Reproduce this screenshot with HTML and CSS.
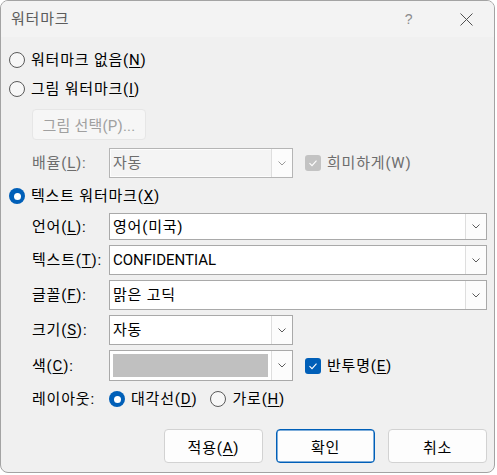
FILE: index.html
```html
<!DOCTYPE html>
<html lang="ko">
<head>
<meta charset="utf-8">
<title>워터마크</title>
<link rel="stylesheet" href="styles.css">
</head>
<body>
<div class="dialog">
  <div class="titlebar">
    <span class="title">워터마크</span>
    <span class="help">?</span>
    <span class="close"><svg width="13" height="13" viewBox="0 0 13 13"><path d="M0.5 0.5 L12.5 12.5 M12.5 0.5 L0.5 12.5" stroke="#505050" stroke-width="1" fill="none"/></svg></span>
  </div>
  <div class="content">
    <div class="radio-row r1"><span class="radio"></span><span class="rtext">워터마크 없음(<u>N</u>)</span></div>
    <div class="radio-row r2"><span class="radio"></span><span class="rtext">그림 워터마크(<u>I</u>)</span></div>
    <div class="indent pic-row"><button class="btn-disabled">그림 선택(P)...</button></div>
    <div class="field-row scale-row">
      <span class="label dim">배율(<u>L</u>):</span>
      <div class="combo short combo-disabled"><span class="value dim">자동</span><span class="drop"><svg width="8" height="5" viewBox="0 0 8 5"><path d="M0.5 0.5 L4 4 L7.5 0.5" fill="none" stroke="#9a9a9a"/></svg></span></div>
      <span class="check"><span class="box box-disabled"><svg width="16" height="16" viewBox="0 0 16 16"><path d="M4.5 8.2 L7 10.6 L11.5 5.6" fill="none" stroke="#fff" stroke-width="1.1"/></svg></span><span class="dim">희미하게(W)</span></span>
    </div>
    <div class="radio-row r3"><span class="radio on"></span><span class="rtext">텍스트 워터마크(<u>X</u>)</span></div>
    <div class="field-row lang-row">
      <span class="label">언어(<u>L</u>):</span>
      <div class="combo full"><span class="value">영어(미국)</span><span class="drop"><svg width="8" height="5" viewBox="0 0 8 5"><path d="M0.5 0.5 L4 4 L7.5 0.5" fill="none" stroke="#5c5c5c"/></svg></span></div>
    </div>
    <div class="field-row std-row">
      <span class="label">텍스트(<u>T</u>):</span>
      <div class="combo full"><span class="value latin">CONFIDENTIAL</span><span class="drop"><svg width="8" height="5" viewBox="0 0 8 5"><path d="M0.5 0.5 L4 4 L7.5 0.5" fill="none" stroke="#5c5c5c"/></svg></span></div>
    </div>
    <div class="field-row std-row">
      <span class="label">글꼴(<u>F</u>):</span>
      <div class="combo full"><span class="value">맑은 고딕</span><span class="drop"><svg width="8" height="5" viewBox="0 0 8 5"><path d="M0.5 0.5 L4 4 L7.5 0.5" fill="none" stroke="#5c5c5c"/></svg></span></div>
    </div>
    <div class="field-row std-row">
      <span class="label">크기(<u>S</u>):</span>
      <div class="combo short"><span class="value">자동</span><span class="drop"><svg width="8" height="5" viewBox="0 0 8 5"><path d="M0.5 0.5 L4 4 L7.5 0.5" fill="none" stroke="#5c5c5c"/></svg></span></div>
    </div>
    <div class="field-row color-row">
      <span class="label">색(<u>C</u>):</span>
      <div class="combo short"><span class="swatch-wrap"><span class="swatch"></span></span><span class="drop"><svg width="8" height="5" viewBox="0 0 8 5"><path d="M0.5 0.5 L4 4 L7.5 0.5" fill="none" stroke="#5c5c5c"/></svg></span></div>
      <span class="check"><span class="box box-on"><svg width="16" height="16" viewBox="0 0 16 16"><path d="M4.5 8.2 L7 10.6 L11.5 5.6" fill="none" stroke="#fff" stroke-width="1.1"/></svg></span><span>반투명(<u>E</u>)</span></span>
    </div>
    <div class="field-row layout-row">
      <span class="label">레이아웃:</span>
      <span class="radio on"></span><span class="rtext">대각선(<u>D</u>)</span>
      <span class="radio second"></span><span class="rtext">가로(<u>H</u>)</span>
    </div>
    <div class="buttons">
      <button class="btn">적용(<u>A</u>)</button>
      <button class="btn default">확인</button>
      <button class="btn">취소</button>
    </div>
  </div>
</div>
</body>
</html>
```

FILE: styles.css
```css
body {
  margin: 0;
  background: #ffffff;
  font-family: Roboto, "Noto Sans CJK KR", sans-serif;
  font-size: 15px;
  letter-spacing: 0.8px;
  color: #000;
}

u {
  text-decoration: underline;
  text-underline-offset: 2px;
  text-decoration-thickness: 1px;
}

.latin {
  letter-spacing: 0;
}

.dialog {
  width: 495px;
  height: 473px;
  box-sizing: border-box;
  border: 1px solid #a3a3a3;
  border-radius: 8px;
  background: #f0f0f0;
  overflow: hidden;
}

.titlebar {
  height: 36px;
  display: flex;
  align-items: center;
  background: #f3f3f3;
  padding-left: 10px;
  padding-right: 5px;
}

.title {
  flex: 1;
  color: #5c5c5c;
  font-size: 15px;
  line-height: 20px;
}

.help {
  width: 46px;
  text-align: center;
  color: #8c8c8c;
  font-family: "Liberation Sans", sans-serif;
  font-size: 14px;
  line-height: 20px;
  padding-left: 2px;
}

.close {
  width: 46px;
  margin-left: 11px;
  display: flex;
  justify-content: center;
  align-items: center;
}

.content {
  padding: 0 7px 0 8px;
  display: flex;
  flex-direction: column;
}

.radio-row {
  height: 22px;
  display: flex;
  align-items: center;
}

.rtext {
  margin-left: 6px;
  line-height: 20px;
}

.r1 { margin-top: 12px; }
.r2 { margin-top: 7px; }
.r3 { margin-top: 7px; }

.radio {
  width: 16px;
  height: 16px;
  box-sizing: border-box;
  border: 1px solid #5a5a5a;
  border-radius: 50%;
  background: #f7f7f7;
  flex: none;
  display: flex;
  align-items: center;
  justify-content: center;
}

.radio.on {
  border: none;
  background: #005fb8;
}

.radio.on::after {
  content: "";
  width: 7px;
  height: 7px;
  border-radius: 50%;
  background: #fff;
}

.radio.second {
  margin-left: 13px;
}

.indent {
  margin-left: 23px;
}

.pic-row {
  margin-top: 9px;
  display: flex;
}

.btn-disabled {
  width: 114px;
  height: 31px;
  box-sizing: border-box;
  border: 1px solid #e6e6e6;
  border-radius: 4px;
  background: #f6f6f6;
  color: #a0a0a0;
  font: inherit;
  letter-spacing: 0.2px;
  padding: 0;
}

.field-row {
  display: flex;
  align-items: center;
  padding-left: 23px;
}

.label {
  width: 77px;
  flex: none;
  line-height: 20px;
}

.dim {
  color: #6d6d6d;
}

.scale-row { margin-top: 8px; height: 30px; }
.lang-row { margin-top: 6px; height: 27px; }
.std-row { margin-top: 5px; height: 30px; }
.color-row { margin-top: 5px; height: 31px; }
.layout-row { margin-top: 7px; height: 22px; }

.combo {
  height: 100%;
  box-sizing: border-box;
  border: 1px solid #a9a9a9;
  background: #fff;
  display: flex;
  align-items: stretch;
}

.combo.full { flex: 1; }
.combo.short { width: 184px; flex: none; }

.combo-disabled {
  background: #f4f4f4;
  border-color: #b5b5b5;
  box-shadow: inset 0 0 0 1px #fdfdfd;
}

.value {
  flex: 1;
  padding-left: 3px;
  display: flex;
  align-items: center;
  line-height: 20px;
}

.drop {
  width: 20px;
  flex: none;
  border-left: 1px solid #dedede;
  background: #fcfcfc;
  display: flex;
  align-items: center;
  justify-content: center;
}

.swatch-wrap {
  flex: 1;
  padding: 3px;
  display: flex;
}

.swatch {
  flex: 1;
  background: #c0c0c0;
}

.check {
  display: flex;
  align-items: center;
  margin-left: 12px;
  line-height: 20px;
}

.box {
  width: 16px;
  height: 16px;
  border-radius: 3px;
  margin-right: 6px;
  display: flex;
}

.box-disabled { background: #c3c3c3; }
.box-on { background: #005fb8; }

.buttons {
  margin-top: 19px;
  display: flex;
  justify-content: flex-end;
  gap: 13px;
}

.btn {
  width: 99px;
  height: 34px;
  box-sizing: border-box;
  border: 1px solid #d2d2d2;
  border-radius: 4px;
  background: #fdfdfd;
  font: inherit;
  letter-spacing: inherit;
  color: #000;
  padding: 0;
}

.btn.default {
  border-color: #005fb8;
  box-shadow: inset 0 0 0 0.5px #005fb8;
}
```
